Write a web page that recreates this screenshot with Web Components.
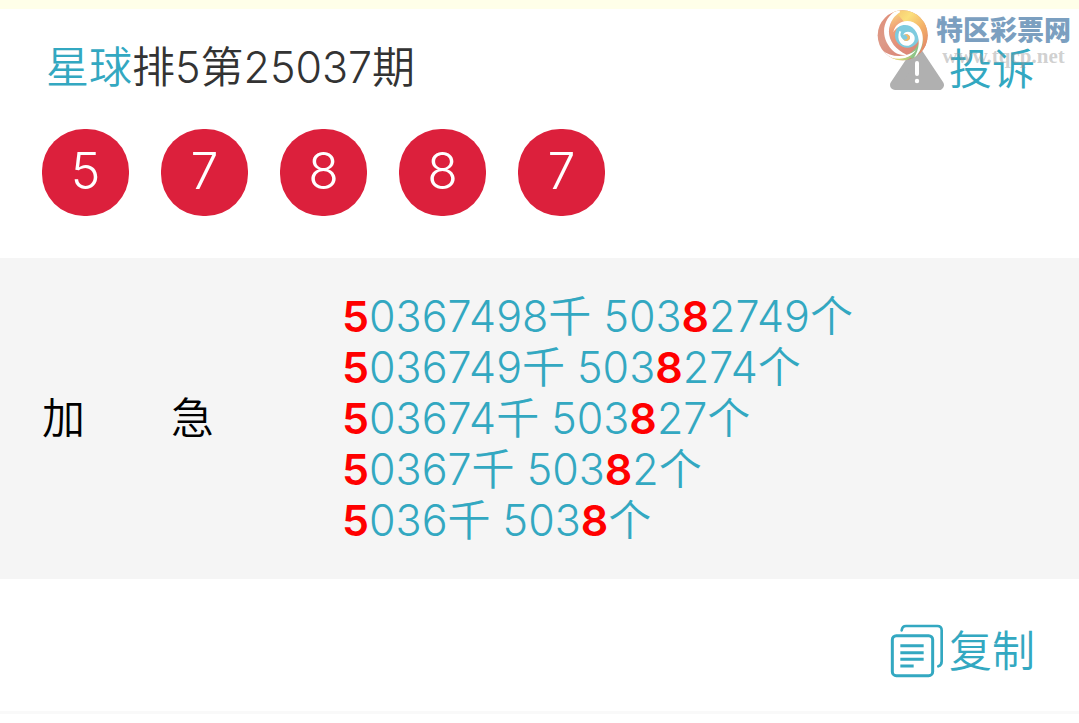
<!doctype html>
<html lang="zh-CN">

	<head>
		<meta charset="utf-8">
		<title>星球排5第25037期</title>
		<meta name="viewport" content="width=device-width, initial-scale=1.0">
		<style>
			body {
				margin: 0;
				background: #fff;
				color: #333;
				font-family: Inter, "Noto Sans CJK SC", sans-serif;
				font-weight: 350;
				font-size: 43px;
				--accent: #33a8c1;
				--hit: #ff0000;
				--ball: #dc203c;
			}
		</style>
	</head>

	<body>

		<draw-page>
			<site-mark slot="mark" url="www.tqcp.net">特区彩票网</site-mark>
			<draw-title slot="title" planet="星球">排5第25037期</draw-title>
			<icon-button slot="report" icon="warn">投诉</icon-button>
			<ball-row slot="balls" numbers="5 7 8 8 7"></ball-row>
			<pick-panel slot="picks" label="加　　急">
				<pick-line><b>5</b>0367498千 503<b>8</b>2749个</pick-line>
				<pick-line><b>5</b>036749千 503<b>8</b>274个</pick-line>
				<pick-line><b>5</b>03674千 503<b>8</b>27个</pick-line>
				<pick-line><b>5</b>0367千 503<b>8</b>2个</pick-line>
				<pick-line><b>5</b>036千 503<b>8</b>个</pick-line>
			</pick-panel>
			<icon-button slot="copy" icon="copy">复制</icon-button>
		</draw-page>

		<script>

			class DrawPage extends HTMLElement {
				constructor() {
					super();
					this.attachShadow({ mode: "open" }).innerHTML = `
						<style>
							:host { display: block; position: relative; }
							.notice { height: 9px; background: #ffffe9; }
							header {
								display: flex;
								justify-content: space-between;
								align-items: flex-start;
								padding: 28px 44px 0 46px;
							}
							.balls { padding: 28px 42px 42px; }
							footer {
								display: flex;
								justify-content: flex-end;
								padding: 40px 44px 28px;
								border-bottom: 3px solid #f9f9f9;
							}
						</style>
						<div class="notice"></div>
						<header>
							<slot name="title"></slot>
							<slot name="report"></slot>
						</header>
						<div class="balls"><slot name="balls"></slot></div>
						<slot name="picks"></slot>
						<footer><slot name="copy"></slot></footer>
						<slot name="mark"></slot>
					`;
				}
			}
			customElements.define("draw-page", DrawPage);

			class DrawTitle extends HTMLElement {
				constructor() {
					super();
					this.attachShadow({ mode: "open" }).innerHTML = `
						<style>
							:host { display: block; }
							h1 { margin: 0; font: inherit; line-height: 60px; }
							a { color: var(--accent); text-decoration: none; }
						</style>
						<h1><a href="#">${this.getAttribute("planet")}</a><slot></slot></h1>
					`;
				}
			}
			customElements.define("draw-title", DrawTitle);

			const icons = {
				warn: `
					<svg width="54" height="54" viewBox="0 0 54 54">
						<path d="M27 10 49 43H5Z" fill="#b0b0b0" stroke="#b0b0b0" stroke-width="10" stroke-linejoin="round"/>
						<path d="M27 21V32" stroke="#fff" stroke-width="4" stroke-linecap="round"/>
						<circle cx="27" cy="39" r="2.200" fill="#fff"/>
					</svg>`,
				copy: `
					<svg width="54" height="54" viewBox="0 0 162 162" fill="none" stroke="#33a8c1" stroke-linecap="round">
						<path d="M35 19Q37 6 48 6H142Q155 6 155 19V112Q155 124 145 127" stroke-width="8"/>
						<rect x="7" y="35" width="121" height="120" rx="12" stroke-width="9"/>
						<path d="M31 65H101M31 86H101M31 106H101M31 126H71" stroke-width="9" stroke-linecap="butt"/>
					</svg>`
			};

			class IconButton extends HTMLElement {
				constructor() {
					super();
					this.attachShadow({ mode: "open" }).innerHTML = `
						<style>
							:host { display: block; }
							button {
								display: flex;
								align-items: center;
								gap: 5px;
								margin: 0;
								padding: 0;
								border: 0;
								background: none;
								color: var(--accent);
								font: inherit;
								line-height: 64px;
								cursor: pointer;
							}
							svg { display: block; }
						</style>
						<button type="button">${icons[this.getAttribute("icon")]}<span><slot></slot></span></button>
					`;
				}
			}
			customElements.define("icon-button", IconButton);

			class BallRow extends HTMLElement {
				constructor() {
					super();
					const balls = this.getAttribute("numbers").split(" ");
					this.attachShadow({ mode: "open" }).innerHTML = `
						<style>
							:host { display: flex; gap: 32px; }
							span {
								width: 87px;
								height: 87px;
								border-radius: 42px;
								background: var(--ball);
								color: #fff;
								font-size: 50px;
								line-height: 84px;
								text-align: center;
							}
						</style>
						${balls.map(n => `<span>${n}</span>`).join("")}
					`;
				}
			}
			customElements.define("ball-row", BallRow);

			class PickPanel extends HTMLElement {
				constructor() {
					super();
					this.attachShadow({ mode: "open" }).innerHTML = `
						<style>
							:host {
								display: grid;
								grid-template-columns: 300px 1fr;
								align-items: center;
								padding: 33px 42px;
								background: #f5f5f5;
							}
							.label { color: #000; line-height: 51px; }
						</style>
						<div class="label">${this.getAttribute("label")}</div>
						<div><slot></slot></div>
					`;
				}
			}
			customElements.define("pick-panel", PickPanel);

			class PickLine extends HTMLElement {
				constructor() {
					super();
					this.attachShadow({ mode: "open" }).innerHTML = `
						<style>
							:host {
								display: block;
								color: var(--accent);
								line-height: 51px;
							}
							::slotted(b) { color: var(--hit); font-weight: 600; }
						</style>
						<slot></slot>
					`;
				}
			}
			customElements.define("pick-line", PickLine);

			// Site watermark, lies over the top right corner
			class SiteMark extends HTMLElement {
				constructor() {
					super();
					this.attachShadow({ mode: "open" }).innerHTML = `
						<style>
							:host {
								position: absolute;
								top: 9px;
								right: 8px;
								display: flex;
								gap: 6px;
								pointer-events: none;
							}
							svg { display: block; }
							.name {
								color: #7b9fc0;
								font-size: 27px;
								font-weight: 900;
								line-height: 36px;
								padding-top: 4px;
							}
							.url {
								color: rgba(150, 150, 150, .45);
								font: bold 21px/14px "Liberation Serif", serif;
								text-align: center;
							}
						</style>
						<svg width="54" height="54" viewBox="0 0 162 162">
							<defs>
								<linearGradient id="base" x1=".1" y1="0" x2=".6" y2="1">
									<stop offset="0" stop-color="#e08e78"/>
									<stop offset=".5" stop-color="#dd9a88"/>
									<stop offset="1" stop-color="#d98070"/>
								</linearGradient>
								<linearGradient id="sun" x1="0" y1="0" x2=".8" y2="1">
									<stop offset="0" stop-color="#f5c070"/>
									<stop offset=".3" stop-color="#fbe07c"/>
									<stop offset=".6" stop-color="#f3b068"/>
									<stop offset="1" stop-color="#dc7c68"/>
								</linearGradient>
								<linearGradient id="band" x1="0" y1="0" x2=".3" y2="1">
									<stop offset="0" stop-color="#f8d880"/>
									<stop offset=".4" stop-color="#f0a078"/>
									<stop offset="1" stop-color="#e08878"/>
								</linearGradient>
								<linearGradient id="leaf">
									<stop offset="0" stop-color="#e8a868"/>
									<stop offset=".4" stop-color="#e4dc70"/>
									<stop offset="1" stop-color="#8cc488"/>
								</linearGradient>
								<clipPath id="disc"><circle cx="80" cy="79" r="75"/></clipPath>
							</defs>
							<g clip-path="url(#disc)">
								<rect width="162" height="162" fill="url(#base)"/>
								<path d="M58 0H162V110L118 158C148 115 142 62 106 44C84 34 66 40 56 56C44 34 46 16 58 0Z" fill="url(#sun)"/>
								<path d="M64 14C28 46 32 104 94 134C116 128 104 122 90 114C58 94 50 66 84 38Z" fill="url(#band)"/>
								<path d="M98 136C124 120 136 96 130 66C150 92 140 130 108 154Z" fill="#8cc488"/>
								<circle cx="94" cy="79" r="37" fill="#7fcbdf"/>
								<path d="M70 0C18 22 6 88 56 130C68 138 80 140 92 137C52 120 30 84 42 48C48 32 56 20 72 10Z" fill="#fff"/>
								<path d="M52 70C58 34 104 24 128 52C150 80 142 124 112 150C132 118 134 86 116 62C96 40 66 46 52 70Z" fill="#fff"/>
								<path d="M70 66C60 96 78 114 98 110C120 104 122 78 104 70C94 66 84 70 82 78C92 72 104 78 102 88C98 98 86 98 80 90C72 82 72 74 76 68Z" fill="#fff"/>
								<path d="M83 78C92 72 104 78 102 88C98 98 86 98 81 91C88 94 96 90 94 84C92 79 87 78 83 78Z" fill="#f5b868"/>
								<path d="M16 122C46 146 88 148 120 124C92 160 44 162 10 126Z" fill="#fff"/>
								<path d="M24 134C56 158 96 152 118 130C96 166 50 170 24 134Z" fill="url(#leaf)"/>
							</g>
						</svg>
						<div>
							<div class="name"><slot></slot></div>
							<div class="url">${this.getAttribute("url")}</div>
						</div>
					`;
				}
			}
			customElements.define("site-mark", SiteMark);

		</script>
	</body>
</html>
